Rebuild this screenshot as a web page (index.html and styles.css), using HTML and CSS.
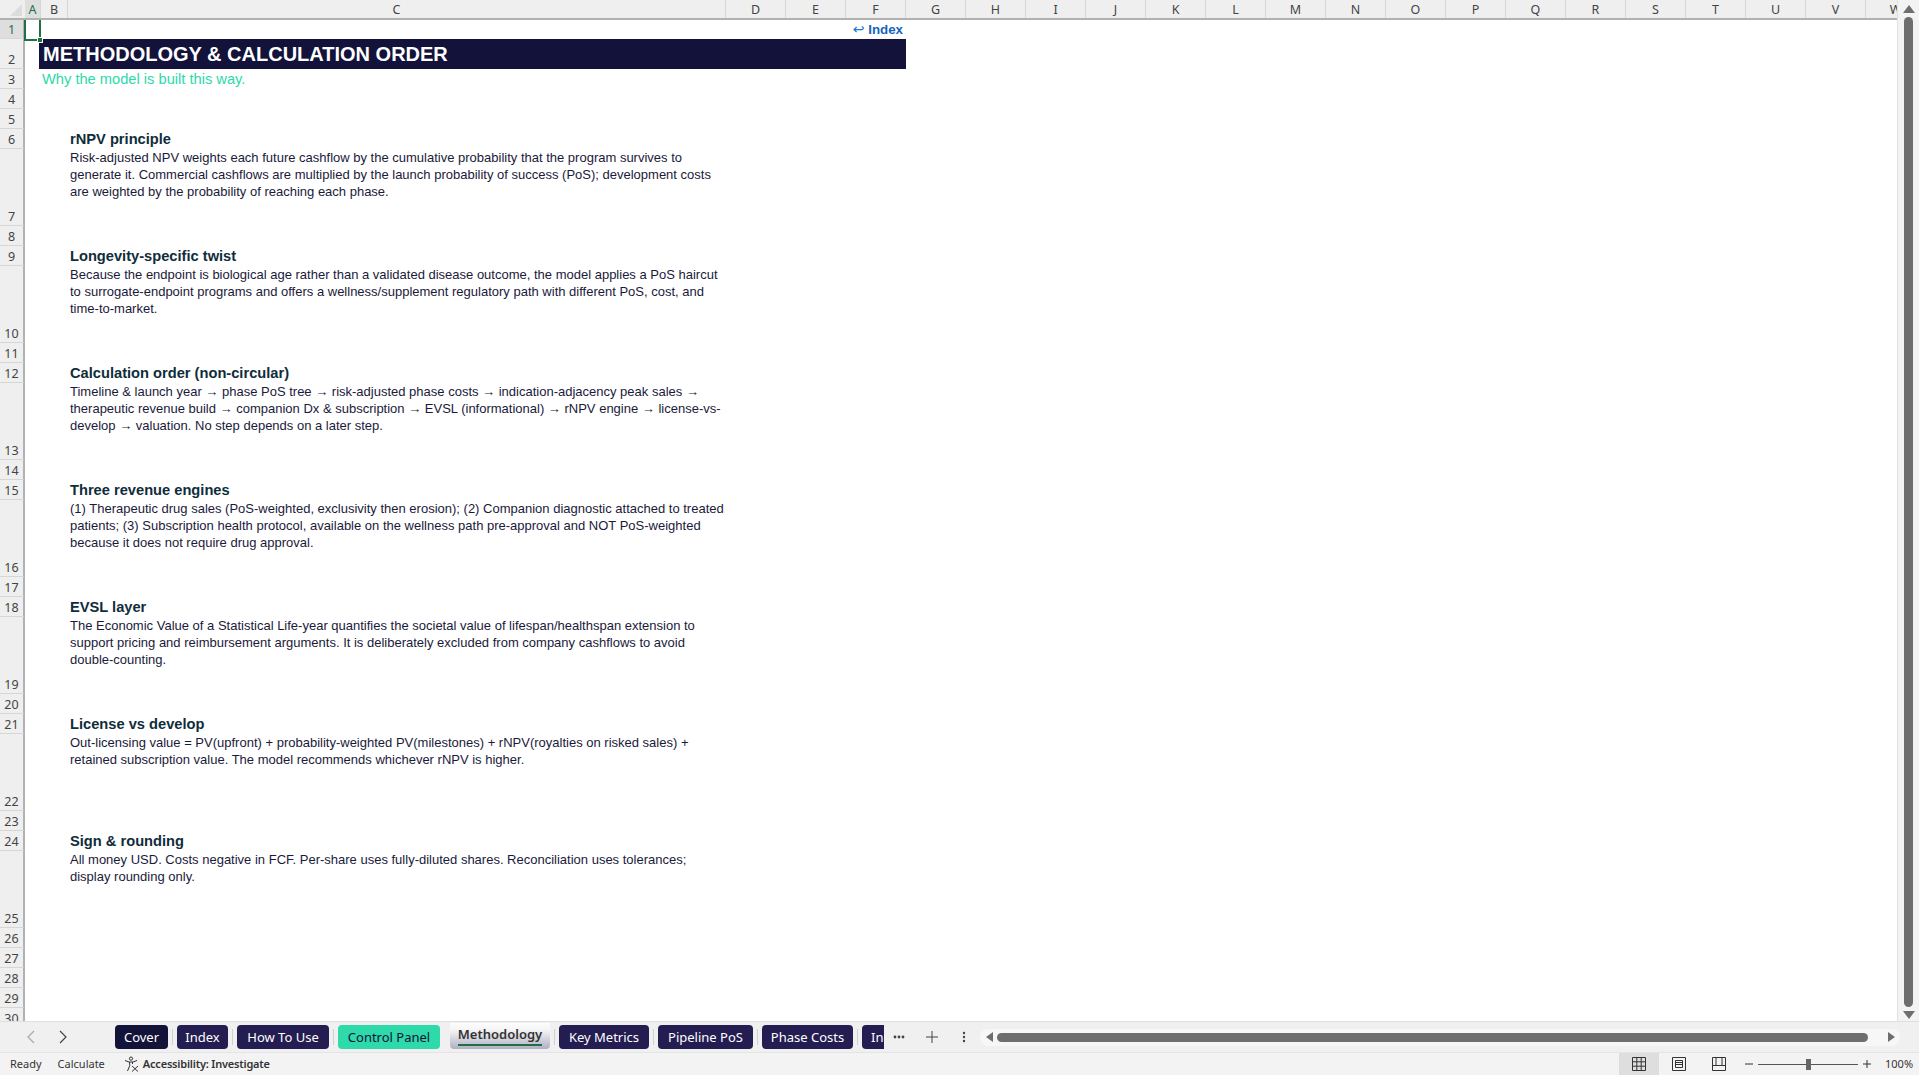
FILE: index.html
```html
<!DOCTYPE html>
<html lang="en">
<head>
<meta charset="utf-8">
<title>Methodology</title>
<link rel="stylesheet" href="styles.css">
</head>
<body>
<div class="app">
  <div class="workarea">
    <div class="gridpane">
      <div class="colhead">
        <div class="corner"><svg width="14" height="14" viewBox="0 0 14 14"><polygon points="14,2 14,14 2,14" fill="#dcdcdc"/></svg></div>
        <div class="ch cha on">A</div><div class="ch chb">B</div><div class="ch chc">C</div>
        <div class="ch">D</div><div class="ch">E</div><div class="ch">F</div><div class="ch">G</div><div class="ch">H</div>
        <div class="ch">I</div><div class="ch">J</div><div class="ch">K</div><div class="ch">L</div><div class="ch">M</div>
        <div class="ch">N</div><div class="ch">O</div><div class="ch">P</div><div class="ch">Q</div><div class="ch">R</div>
        <div class="ch">S</div><div class="ch">T</div><div class="ch">U</div><div class="ch">V</div><div class="ch">W</div>
      </div>
      <div class="sheet">
        <div class="rh on">1</div><div class="selbox"><span class="handle"></span></div><div class="indexlink"><span class="arrow">↩</span> Index</div>
        <div class="rh">2</div><div class="title">METHODOLOGY &amp; CALCULATION ORDER</div>
        <div class="rh">3</div><div class="subtitle">Why the model is built this way.</div>
        <div class="rh">4</div>
        <div class="rh">5</div>
        <div class="rh">6</div><div class="heading">rNPV principle</div>
        <div class="rh">7</div><div class="body">Risk-adjusted NPV weights each future cashflow by the cumulative probability that the program survives to<br>generate it. Commercial cashflows are multiplied by the launch probability of success (PoS); development costs<br>are weighted by the probability of reaching each phase.</div>
        <div class="rh">8</div>
        <div class="rh">9</div><div class="heading">Longevity-specific twist</div>
        <div class="rh">10</div><div class="body">Because the endpoint is biological age rather than a validated disease outcome, the model applies a PoS haircut<br>to surrogate-endpoint programs and offers a wellness/supplement regulatory path with different PoS, cost, and<br>time-to-market.</div>
        <div class="rh">11</div>
        <div class="rh">12</div><div class="heading">Calculation order (non-circular)</div>
        <div class="rh">13</div><div class="body">Timeline &amp; launch year → phase PoS tree → risk-adjusted phase costs → indication-adjacency peak sales →<br>therapeutic revenue build → companion Dx &amp; subscription → EVSL (informational) → rNPV engine → license-vs-<br>develop → valuation. No step depends on a later step.</div>
        <div class="rh">14</div>
        <div class="rh">15</div><div class="heading">Three revenue engines</div>
        <div class="rh">16</div><div class="body">(1) Therapeutic drug sales (PoS-weighted, exclusivity then erosion); (2) Companion diagnostic attached to treated<br>patients; (3) Subscription health protocol, available on the wellness path pre-approval and NOT PoS-weighted<br>because it does not require drug approval.</div>
        <div class="rh">17</div>
        <div class="rh">18</div><div class="heading">EVSL layer</div>
        <div class="rh">19</div><div class="body">The Economic Value of a Statistical Life-year quantifies the societal value of lifespan/healthspan extension to<br>support pricing and reimbursement arguments. It is deliberately excluded from company cashflows to avoid<br>double-counting.</div>
        <div class="rh">20</div>
        <div class="rh">21</div><div class="heading">License vs develop</div>
        <div class="rh">22</div><div class="body">Out-licensing value = PV(upfront) + probability-weighted PV(milestones) + rNPV(royalties on risked sales) +<br>retained subscription value. The model recommends whichever rNPV is higher.</div>
        <div class="rh">23</div>
        <div class="rh">24</div><div class="heading">Sign &amp; rounding</div>
        <div class="rh">25</div><div class="body">All money USD. Costs negative in FCF. Per-share uses fully-diluted shares. Reconciliation uses tolerances;<br>display rounding only.</div>
        <div class="rh">26</div>
        <div class="rh">27</div>
        <div class="rh">28</div>
        <div class="rh">29</div>
        <div class="rh">30</div>
      </div>
    </div>
    <div class="vscroll">
      <svg class="varrow" width="12" height="8" viewBox="0 0 12 8"><polygon points="6,0 12,8 0,8" fill="#6e6e6e"/></svg>
      <div class="vthumb"></div>
      <svg class="varrow" width="12" height="8" viewBox="0 0 12 8"><polygon points="0,0 12,0 6,8" fill="#6e6e6e"/></svg>
    </div>
  </div>
  <div class="tabbar">
    <div class="tabnav">
      <svg width="10" height="14" viewBox="0 0 10 14"><path d="M8 1 2 7l6 6" fill="none" stroke="#a8a8a8" stroke-width="1.2"/></svg>
      <svg width="10" height="14" viewBox="0 0 10 14"><path d="M2 1l6 6-6 6" fill="none" stroke="#444" stroke-width="1.2"/></svg>
    </div>
    <div class="tabs">
      <div class="tab navy tw-cover">Cover</div><i class="sep"></i>
      <div class="tab plum tw-index">Index</div><i class="sep"></i>
      <div class="tab plum tw-how">How To Use</div><i class="sep"></i>
      <div class="tab mint tw-control">Control Panel</div>
      <div class="tab active tw-method"><span>Methodology</span></div><i class="sep"></i>
      <div class="tab plum tw-key">Key Metrics</div><i class="sep"></i>
      <div class="tab plum tw-pipe">Pipeline PoS</div><i class="sep"></i>
      <div class="tab plum tw-phase">Phase Costs</div><i class="sep"></i>
      <div class="tab plum tw-in">Indication</div>
    </div>
    <div class="tabtools">
      <svg class="tool-dots" width="12" height="4" viewBox="0 0 12 4"><circle cx="2" cy="2" r="1.4" fill="#444"/><circle cx="6" cy="2" r="1.4" fill="#444"/><circle cx="10" cy="2" r="1.4" fill="#444"/></svg>
      <svg class="tool-plus" width="12" height="12" viewBox="0 0 12 12"><path d="M6 0v12M0 6h12" stroke="#444" stroke-width="1"/></svg>
      <svg class="tool-more" width="4" height="12" viewBox="0 0 4 12"><circle cx="2" cy="2" r="1.2" fill="#444"/><circle cx="2" cy="6" r="1.2" fill="#444"/><circle cx="2" cy="10" r="1.2" fill="#444"/></svg>
    </div>
    <div class="hscroll">
      <svg width="7" height="10" viewBox="0 0 7 10"><polygon points="7,0 7,10 0,5" fill="#6e6e6e"/></svg>
      <div class="hthumb"></div>
      <svg width="7" height="10" viewBox="0 0 7 10"><polygon points="0,0 7,5 0,10" fill="#6e6e6e"/></svg>
    </div>
  </div>
  <div class="status">
    <span class="st-ready">Ready</span>
    <span class="st-calc">Calculate</span>
    <svg class="st-icon" width="16" height="16" viewBox="0 0 16 16" fill="none" stroke="#333" stroke-width="1"><circle cx="7" cy="2.6" r="1.6"/><path d="M1 4.5 5 6h4l4-1.5M5.5 6l.3 3.5L3.5 15M8.5 6v2"/><path d="M8 10l6 5.5M14 10l-6 5.5"/></svg>
    <span class="st-acc">Accessibility: Investigate</span>
    <div class="viewbtns">
      <div class="vb on"><svg width="14" height="14" viewBox="0 0 14 14" fill="none" stroke="#333"><path d="M.5.5h13v13H.5zM.5 4.8h13M.5 9.2h13M4.8.5v13M9.2.5v13"/></svg></div>
      <div class="vb"><svg width="14" height="14" viewBox="0 0 14 14" fill="none" stroke="#333"><path d="M.5.5h13v13H.5zM3.5 3.5h7v7h-7zM3.5 5.5h7M3.5 7.5h7"/></svg></div>
      <div class="vb"><svg width="14" height="14" viewBox="0 0 14 14" fill="none" stroke="#333"><path d="M.5.5h13v13H.5zM.5 8.5h13M4 .5v8M10 .5v8"/></svg></div>
    </div>
    <div class="zoom">
      <svg width="8" height="2" viewBox="0 0 8 2"><path d="M0 1h8" stroke="#333"/></svg>
      <div class="zslider"><span class="zthumb"></span></div>
      <svg width="8" height="8" viewBox="0 0 8 8"><path d="M0 4h8M4 0v8" stroke="#333"/></svg>
    </div>
    <span class="st-pct">100%</span>
  </div>
</div>
</body>
</html>
```
FILE: styles.css
```css
* { box-sizing: border-box; }
html, body { margin: 0; padding: 0; height: 100%; overflow: hidden; background: #fff; }
.app { display: flex; flex-direction: column; height: 1075px; width: 1919px; font-family: "Liberation Sans", Arial, sans-serif; }

.workarea { display: flex; height: 1021px; flex: none; }
.gridpane { width: 1898px; flex: none; display: flex; flex-direction: column; overflow: hidden; border-right: 1px solid #e2e2e2; }

.colhead { display: flex; height: 20px; flex: none; background: #efefef; border-bottom: 2px solid #b1b1b1; overflow: hidden; }
.corner { width: 25px; flex: none; display: flex; align-items: flex-end; justify-content: flex-end; padding: 0 3px 2px 0; }
.ch { width: 60px; flex: none; text-align: center; font: 12.5px/20px "Noto Sans", sans-serif; color: #444; border-right: 1px solid #d6d6d6; }
.cha { width: 16px; }
.chb { width: 27px; }
.chc { width: 658px; }
.ch.on { background: #dedede; color: #1f7145; }

.sheet {
  flex: 1; min-height: 0; overflow: hidden; display: grid; position: relative;
  grid-template-columns: 25px 16px 27px 658px 60px 60px 60px 1fr;
  grid-template-rows: 19px 30px 20px 20px 20px 20px 77px 20px 20px 77px 20px 20px 77px 20px 20px 77px 20px 20px 77px 20px 20px 77px 20px 20px 77px 20px 20px 20px 20px 20px;
}
.rh {
  grid-column: 1; display: flex; align-items: flex-end; justify-content: center;
  background: #efefef; border-right: 2px solid #b1b1b1; border-bottom: 1px solid #d6d6d6;
  font: 12.5px/17px "Noto Sans", sans-serif; color: #444;
}
.rh.on { background: #dedede; color: #1f7145; }

.selbox { grid-column: 2; position: relative; margin: -2px 0 -2px -1px; border: 2px solid #1f7145; z-index: 2; }
.handle { position: absolute; right: -4px; bottom: -4px; width: 6px; height: 6px; background: #1f7145; border: 1px solid #fff; }

.indexlink { grid-column: 7; text-align: right; padding-right: 3px; font-size: 13.33px; line-height: 19px; font-weight: bold; color: #1565c0; white-space: nowrap; }
.arrow { font-family: "DejaVu Sans", sans-serif; font-weight: normal; font-size: 14px; color: #1976d2; }

.title { grid-column: 3 / 8; background: #12123a; color: #fff; font-size: 20px; line-height: 30px; font-weight: bold; padding-left: 4px; margin-left: -2px; white-space: nowrap; }
.subtitle { grid-column: 3 / 8; color: #2ed9aa; font-size: 14.67px; line-height: 20px; padding-left: 1px; white-space: nowrap; }
.heading { grid-column: 4; color: #0f2d3a; font-size: 14.67px; line-height: 21px; font-weight: bold; padding-left: 2px; white-space: nowrap; }
.body { grid-column: 4; color: #1a1a3a; font-size: 13px; line-height: 17px; padding-left: 2px; white-space: nowrap; }

.vscroll { flex: 1; background: #f3f3f3; display: flex; flex-direction: column; align-items: center; padding: 5px 0 2px; }
.varrow { flex: none; }
.vthumb { flex: 1; width: 9px; background: #6e6e6e; border-radius: 5px; margin: 4px 0; }

.tabbar { height: 32px; flex: none; display: flex; align-items: center; background: #f0f0f0; border-top: 1px solid #dfdfdf; border-bottom: 1px solid #e4e4e4; }
.tabnav { width: 115px; flex: none; display: flex; gap: 22px; padding-left: 26px; }
.tabs { width: 769px; flex: none; display: flex; align-items: center; overflow: hidden; height: 28px; }
.tab { flex: none; height: 24px; border-radius: 4px; font: 13px/24px "Noto Sans", sans-serif; text-align: center; white-space: nowrap; overflow: hidden; }
.sep { flex: none; width: 1px; height: 16px; margin: 0 4px; background: #d0d0d0; }
.navy { background: #13133a; color: #fff; }
.plum { background: #241d52; color: #fff; }
.mint { background: #2ed9aa; color: #13133a; }
.tw-cover { width: 53px; }
.tw-index { width: 51px; }
.tw-how { width: 92px; }
.tw-control { width: 102px; }
.tw-method { width: 100px; margin-left: 10px; }
.tw-key { width: 90px; }
.tw-pipe { width: 95px; }
.tw-phase { width: 91px; }
.tw-in { width: 64px; padding-left: 9px; text-align: left; }
.active { height: 27px; margin-top: -3px; background: linear-gradient(#ffffff, #f4f4f6 30%, #b0afc4); color: #333; font-weight: 600; border-radius: 0 0 4px 4px; line-height: 24px; }
.active span { display: inline-block; border-bottom: 2px solid #1f7145; line-height: 20px; }

.tabtools { width: 96px; flex: none; display: flex; align-items: center; }
.tool-dots { margin-left: 9px; }
.tool-plus { margin-left: 21px; }
.tool-more { margin-left: 24px; }
.hscroll { width: 920px; height: 17px; flex: none; display: flex; align-items: center; padding: 0 5px 0 6px; background: #f7f7f7; border-radius: 8px; }
.hthumb { flex: 1; height: 9px; margin: 0 20px 0 4px; background: #6e6e6e; border-radius: 5px; }

.status { flex: 1; display: flex; align-items: center; background: #f3f3f3; font: 11px/22px "Noto Sans", sans-serif; color: #333; }
.st-ready { margin-left: 10px; }
.st-calc { margin-left: 16px; }
.st-icon { margin-left: 19px; flex: none; }
.st-acc { margin-left: 3px; font-weight: 600; letter-spacing: -0.2px; }
.viewbtns { margin-left: auto; display: flex; height: 100%; }
.vb { width: 40px; display: flex; align-items: center; justify-content: center; }
.vb.on { background: #dedede; }
.zoom { display: flex; align-items: center; margin-left: 6px; gap: 5px; }
.zslider { width: 100px; height: 1px; background: #555; position: relative; }
.zthumb { position: absolute; left: 48px; top: -5px; width: 5px; height: 11px; background: #666; }
.st-pct { width: 48px; padding-left: 14px; white-space: nowrap; }
```
